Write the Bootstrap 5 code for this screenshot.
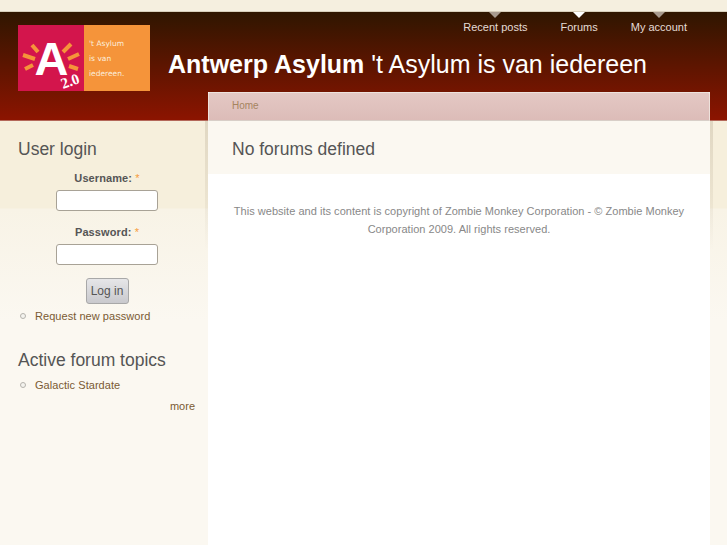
<!DOCTYPE html>
<html lang="en">
<head>
  <meta charset="UTF-8">
  <meta name="viewport" content="width=device-width, initial-scale=1">
  <title>Antwerp Asylum</title>
  <link href="https://cdn.jsdelivr.net/npm/bootstrap@5.3.3/dist/css/bootstrap.min.css" rel="stylesheet">
  <style>
    html, body { height: 545px; overflow: hidden; }
    body { font-family: "Liberation Sans", Arial, sans-serif; font-size: 11px; color: #555; background: #fbf8f1; }
    a { color: #7a5a33; text-decoration: none; }
    .top-strip { height: 12px; background: #f5efdf; border-bottom: 1px solid #d8cfbb; }
    .site-head { height: 109px; background: linear-gradient(#2f1600, #8c1400); border-bottom: 1px solid #b4685a; }
    .site-logo { margin: 13px 0 0 18px; width: 132px; height: 66px; display: block; flex: none; }
    .site-name { margin: 0 0 0 18px; padding-top: 36px; font-size: 25px; line-height: 32px; color: #fff; white-space: nowrap; }
    .main-nav { right: 40px; top: 0; gap: 33px; }
    .main-nav a { color: #e4dcd6; display: block; padding-top: 8px; position: relative; line-height: 14px; }
    .main-nav a::before { content: ""; position: absolute; top: 0; left: 50%; margin-left: -6px; border: 6px solid transparent; border-top-color: #a89a8e; border-bottom: 0; }
    .main-nav a.on::before { border-top-color: #fff; }
    .page-wrap { height: 424px; background: linear-gradient(#f6efdc 0, #f6efdc 87px, #f8f3e6 88px, #fbf8f1 200px); }
    .side-col { width: 208px; flex: none; padding: 17px 12px 0 18px; }
    .side-col h2 { font-size: 17.5px; line-height: 22px; font-weight: 400; color: #555; margin: 0; }
    .side-col h2.topics-head { margin-top: 26px; }
    .login-field { text-align: center; margin-top: 14px; }
    .login-field.first-field { margin-top: 11px; }
    .login-field label { display: block; font-weight: 700; line-height: 14px; color: #555; letter-spacing: .1px; }
    .login-field label span { color: #f79c3c; font-weight: 400; }
    .login-field input { width: 102px; height: 21px; display: block; margin: 5px auto 0; background: #fff; border: 1px solid #a8a296; border-radius: 3px; padding: 0; }
    .login-btn { display: block; margin: 13px auto 0; height: 26px; width: 43px; padding: 0; font-size: 12px; color: #555; background: linear-gradient(#e6e6e8, #c9c9cd); border: 1px solid #a8a8a8; border-radius: 3px; }
    .ring-list { list-style: none; margin: 5px 0 0; padding: 0; }
    .ring-list.topic-list { margin-top: 7px; }
    .ring-list li { padding-left: 17px; position: relative; line-height: 14px; letter-spacing: .05px; }
    .ring-list li::before { content: ""; position: absolute; left: 2px; top: 4px; width: 6px; height: 6px; border: 1px solid #b5b3ad; border-radius: 50%; background: #f4f3ee; }
    .more-link { margin: 7px 1px 0 0; text-align: right; line-height: 14px; }
    .main-col { width: 502px; flex: none; margin-top: -29px; position: relative; background: #fff; height: 453px; }
    .main-col::before, .main-col::after { content: ""; position: absolute; top: 29px; width: 3px; height: 130px; background: linear-gradient(rgba(110, 90, 60, .16), rgba(110, 90, 60, .08) 60%, transparent); }
    .main-col::before { left: -3px; }
    .main-col::after { right: -3px; }
    .crumb-bar { height: 29px; background: linear-gradient(#e4c8c4, #dcbcb8); border: 1px solid #eee2dc; border-bottom: 1px solid #d8cfc8; border-radius: 2px 2px 0 0; padding: 6px 0 0 23px; font-size: 10px; line-height: 13px; }
    .crumb-bar a { color: #a5845f; }
    .page-title { height: 53px; background: #fbf8f1; padding: 17px 0 0 24px; margin: 0; font-size: 17.5px; line-height: 22px; font-weight: 400; color: #555; }
    .foot-note { margin: 28px 20px 0; text-align: center; line-height: 18px; color: #888; font-size: 11px; letter-spacing: .03px; }
  </style>
</head>
<body>
  <div class="top-strip"></div>

  <!-- cabecera -->
  <header class="site-head d-flex position-relative">
    <svg class="site-logo" viewBox="0 0 132 66">
      <rect width="66" height="66" fill="#d3154c"/>
      <rect x="66" width="66" height="66" fill="#f5943a"/>
      <path d="M14 20l6 7M5 30l12 4M7 44l8-4M53 19l-8 8M61 29l-11 5M60 44l-9-3" stroke="#f5943a" stroke-width="4" fill="none"/>
      <text x="33.5" y="50" text-anchor="middle" fill="#fff" font-family="Liberation Sans" font-weight="700" font-size="47">A</text>
      <text x="45" y="64" fill="#fff" font-family="Liberation Serif" font-weight="700" font-size="15" transform="rotate(-20 45 64)">2.0</text>
      <g fill="#fbeedd" font-family="DejaVu Sans" font-size="7.5">
        <text x="71" y="21">'t Asylum</text>
        <text x="71" y="36">is van</text>
        <text x="71" y="51">iedereen.</text>
      </g>
    </svg>
    <h1 class="site-name fw-normal"><b>Antwerp Asylum</b> 't Asylum is van iedereen</h1>
    <nav class="main-nav d-flex position-absolute">
      <a href="#">Recent posts</a>
      <a href="#" class="on">Forums</a>
      <a href="#">My account</a>
    </nav>
  </header>

  <div class="page-wrap d-flex">
    <aside class="side-col">
      <h2>User login</h2>
      <form>
        <div class="login-field first-field">
          <label>Username: <span>*</span></label>
          <input type="text">
        </div>
        <div class="login-field">
          <label>Password: <span>*</span></label>
          <input type="password">
        </div>
        <button type="button" class="login-btn">Log in</button>
      </form>
      <ul class="ring-list">
        <li><a href="#">Request new password</a></li>
      </ul>
      <h2 class="topics-head">Active forum topics</h2>
      <ul class="ring-list topic-list">
        <li><a href="#">Galactic Stardate</a></li>
      </ul>
      <div class="more-link"><a href="#">more</a></div>
    </aside>

    <main class="main-col">
      <div class="crumb-bar"><a href="#">Home</a></div>
      <h2 class="page-title">No forums defined</h2>
      <p class="foot-note">This website and its content is copyright of Zombie Monkey Corporation - © Zombie Monkey Corporation 2009. All rights reserved.</p>
    </main>
    <div class="flex-grow-1"></div>
  </div>

  <script src="https://cdn.jsdelivr.net/npm/bootstrap@5.3.3/dist/js/bootstrap.bundle.min.js"></script>
</body>
</html>
